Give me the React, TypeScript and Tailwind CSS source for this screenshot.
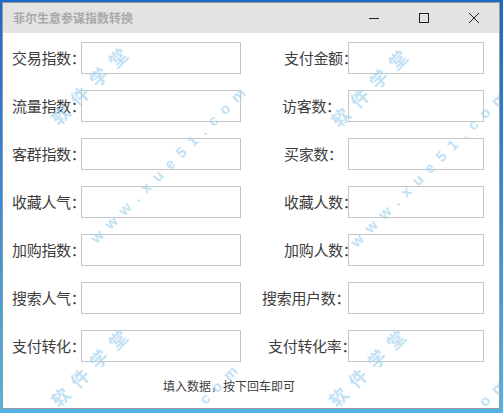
const font = { fontFamily: '"Noto Sans CJK SC", "Microsoft YaHei", sans-serif' };
const latin = { fontFamily: '"Liberation Sans", Arial, sans-serif' };

type Row = { left: string; right: string; pad: string };

const ROWS: Row[] = [
  { left: '交易指数：', right: '支付金额：', pad: 'pl-[43px]' },
  { left: '流量指数：', right: '访客数：', pad: 'pl-[41px]' },
  { left: '客群指数：', right: '买家数：', pad: 'pl-[43px]' },
  { left: '收藏人气：', right: '收藏人数：', pad: 'pl-[43px]' },
  { left: '加购指数：', right: '加购人数：', pad: 'pl-[43px]' },
  { left: '搜索人气：', right: '搜索用户数：', pad: 'pl-[21px]' },
  { left: '支付转化：', right: '支付转化率：', pad: 'pl-[27px]' },
];

function Watermark() {
  const cn = 'absolute -translate-x-1/2 -translate-y-1/2 -rotate-45 whitespace-nowrap text-[18px] font-bold tracking-[9px] text-[#a9d5f2]';
  const en = 'absolute -translate-x-1/2 -translate-y-1/2 -rotate-45 whitespace-nowrap text-[15px] font-bold tracking-[8px] text-[#a9d5f2]';
  return (
    <div className="pointer-events-none absolute inset-0 overflow-hidden opacity-70">
      <span className={`${cn} left-[89px] top-[80px]`} style={font}>软件学堂</span>
      <span className={`${cn} left-[369px] top-[82px]`} style={font}>软件学堂</span>
      <span className={`${cn} left-[89px] top-[362px]`} style={font}>软件学堂</span>
      <span className={`${cn} left-[367px] top-[362px]`} style={font}>软件学堂</span>
      <span className={`${en} left-[168px] top-[160px]`} style={latin}>www.xue51.com</span>
      <span className={`${en} left-[428px] top-[164px]`} style={latin}>www.xue51.com</span>
      <span className={`${en} left-[160px] top-[438px]`} style={latin}>www.xue51.com</span>
      <span className={`${en} left-[428px] top-[452px]`} style={latin}>www.xue51.com</span>
    </div>
  );
}

function TitleBar() {
  return (
    <div className="flex h-[30px] items-center bg-[#e3e3e3]">
      <span className="pl-[10px] text-[12px] font-bold text-[#a9a9a9]" style={font}>
        菲尔生意参谋指数转换
      </span>
      <div className="ml-auto flex h-full">
        <div className="flex w-[50px] items-center justify-center">
          <svg width="12" height="12" viewBox="0 0 12 12">
            <path d="M1 6.5h10" stroke="#222" strokeWidth="1" />
          </svg>
        </div>
        <div className="flex w-[50px] items-center justify-center">
          <svg width="12" height="12" viewBox="0 0 12 12">
            <rect x="1.5" y="1.5" width="9" height="9" fill="none" stroke="#222" strokeWidth="1" />
          </svg>
        </div>
        <div className="flex w-[50px] items-center justify-center">
          <svg width="12" height="12" viewBox="0 0 12 12">
            <path d="M1 1l10 10M11 1L1 11" stroke="#222" strokeWidth="1" />
          </svg>
        </div>
      </div>
    </div>
  );
}

export default function App() {
  return (
    <div className="h-[413px] w-[503px] overflow-hidden bg-linear-to-b from-[#1d68c4] to-[#52b2e8] pl-[2px] pt-[2px]">
      <div className="relative h-[407px] w-[498px] border border-[#9c9c9c] bg-white">
        <TitleBar />
        <div className="flex flex-col gap-[16px] pt-[9px]" style={font}>
          {ROWS.map((r) => (
            <div key={r.left} className="flex h-[32px] items-center pl-[9px] text-[15px] text-[#3e3e3e]">
              <span className="w-[69px] shrink-0 whitespace-nowrap tracking-[-0.3px]">{r.left}</span>
              <input className="h-[32px] w-[160px] shrink-0 border border-[#c4c4c4] bg-transparent outline-none" />
              <span className={`w-[107px] shrink-0 whitespace-nowrap tracking-[-0.3px] ${r.pad}`}>{r.right}</span>
              <input className="h-[32px] w-[136px] shrink-0 border border-[#c4c4c4] bg-transparent outline-none" />
            </div>
          ))}
          <div className="pl-[160px] text-[12px] leading-[16px] text-[#3e3e3e]">
            填入数据，按下回车即可
          </div>
        </div>
        <Watermark />
      </div>
    </div>
  );
}
